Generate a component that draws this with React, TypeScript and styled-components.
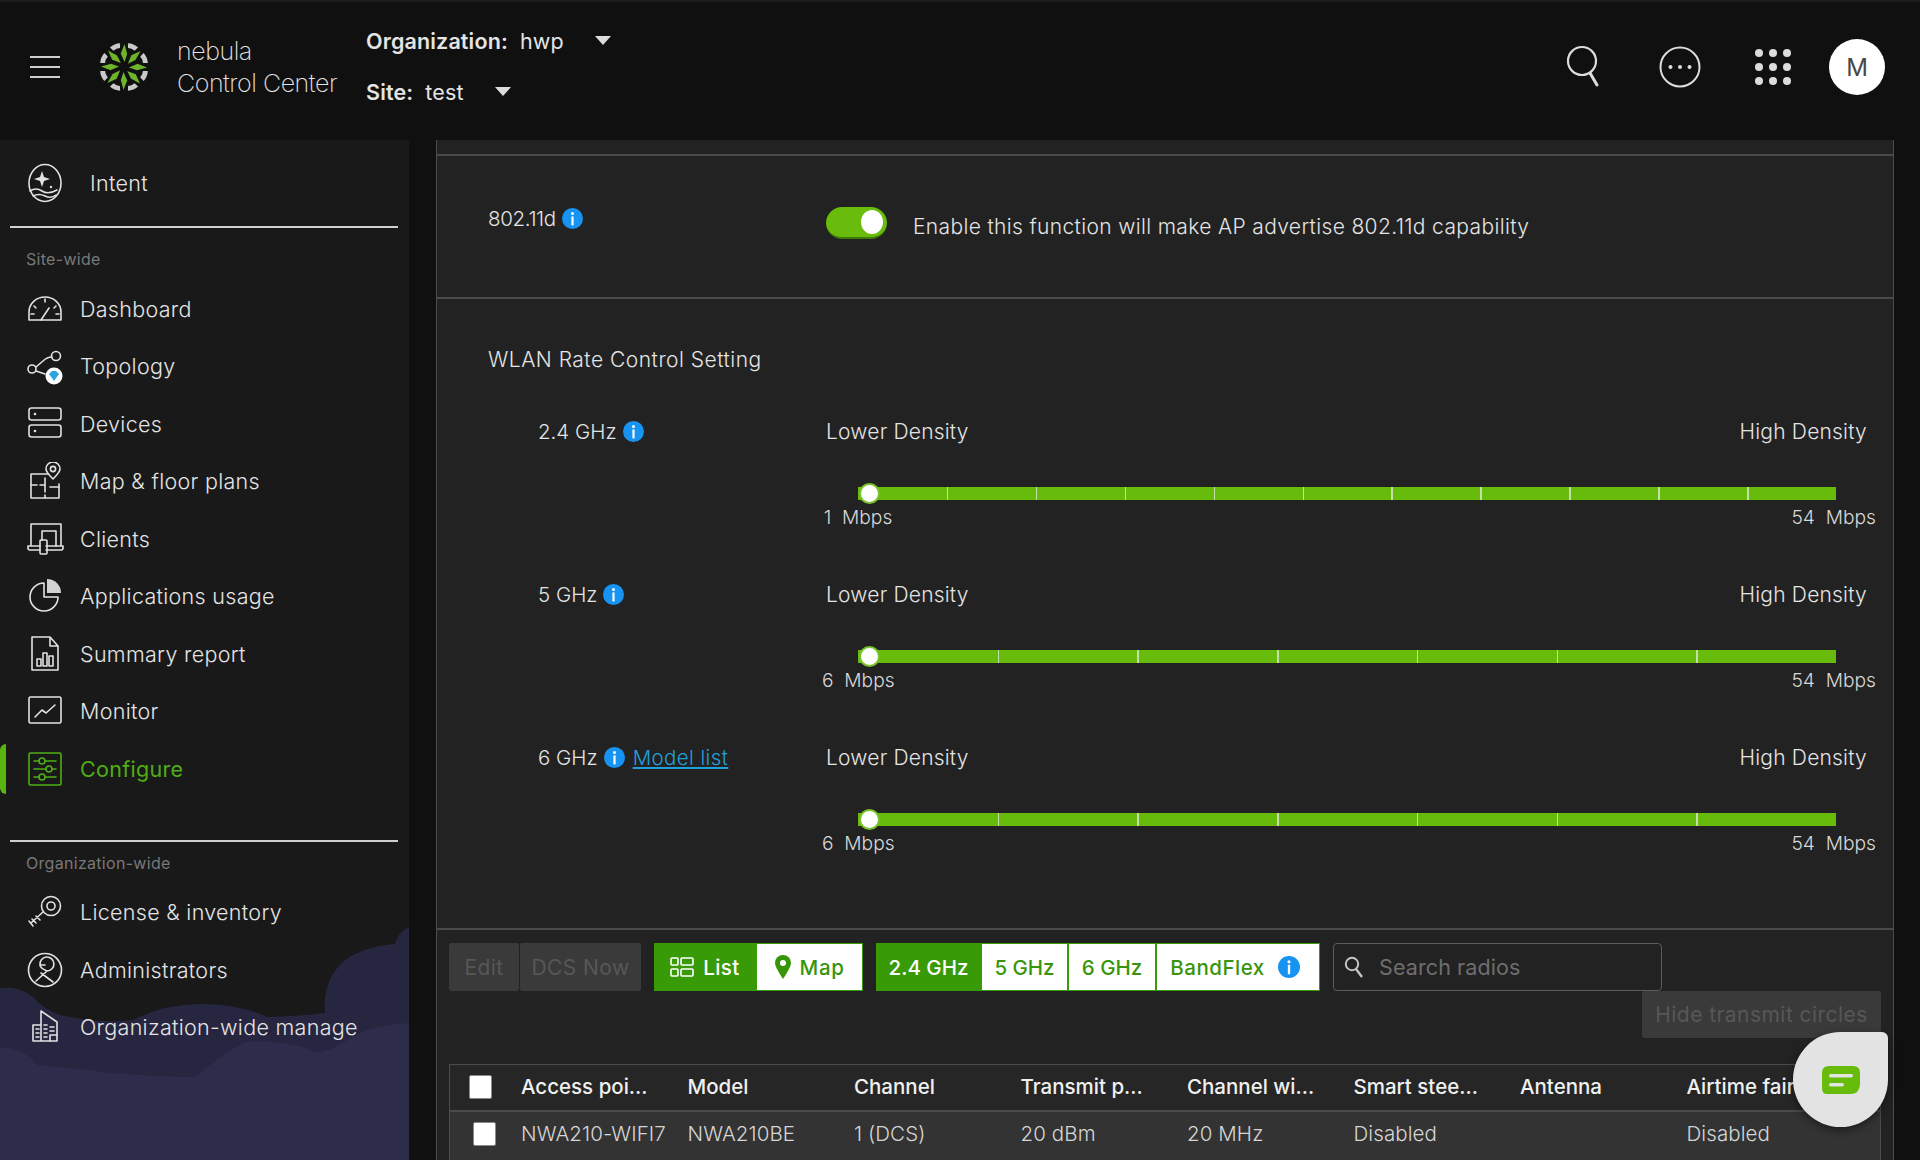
import React from "react";
import styled, { createGlobalStyle } from "styled-components";

const Global = createGlobalStyle`
  html, body { margin: 0; padding: 0; background: #101010; }
  body { font-family: Inter, "Noto Sans", "Liberation Sans", sans-serif; }
  * { box-sizing: border-box; }
`;

const Page = styled.div`
  position: relative;
  width: 1920px;
  height: 1160px;
  overflow: hidden;
  display: flex;
  flex-direction: column;
  background: #101010;
  color: #e6e6e6;
  font-weight: 300;
`;

/* ---------- header ---------- */
const Header = styled.header`
  height: 140px;
  flex: none;
  display: flex;
  align-items: center;
  padding: 0 35px 8px 30px;
  border-top: 2px solid #1c1c1c;
`;
const Burger = styled.div`
  width: 30px;
  display: flex;
  flex-direction: column;
  gap: 8px;
  margin-right: 36px;
  span { display: block; height: 2px; background: #cfcfcf; }
`;
const BrandText = styled.div`
  margin-left: 25px;
  width: 189px;
  font-size: 25px;
  line-height: 32px;
  font-weight: 200;
  color: #e4e4e4;
  white-space: nowrap;
  letter-spacing: -0.45px;
`;
const Pickers = styled.div`
  display: flex;
  flex-direction: column;
  gap: 25px;
  margin-top: -2px;
`;
const Picker = styled.div`
  display: flex;
  align-items: center;
  height: 26px;
  font-size: 21.5px;
  white-space: nowrap;
  color: #e4e4e4;
  font-weight: 400;
  letter-spacing: 0.15px;
  b { font-weight: 600; margin-right: 12px; }
`;
const Caret = styled.i<{ $gap: number }>`
  margin-left: ${(p) => p.$gap}px;
  width: 0;
  height: 0;
  border-left: 8.5px solid transparent;
  border-right: 8.5px solid transparent;
  border-top: 9px solid #dcdcdc;
`;
const Spacer = styled.div`
  flex: 1;
`;
const HeadIcons = styled.div`
  display: flex;
  align-items: center;
`;
const SearchGlyph = styled.svg`
  margin: 4px 54px 0 0;
`;
const MoreGlyph = styled.svg`
  margin-right: 54px;
`;
const Avatar = styled.div`
  width: 56px;
  height: 56px;
  border-radius: 50%;
  background: #fff;
  color: #484848;
  font-size: 24px;
  font-weight: 400;
  display: flex;
  align-items: center;
  justify-content: center;
  margin-left: 38px;
`;

/* ---------- layout ---------- */
const Body = styled.div`
  flex: 1;
  display: flex;
  min-height: 0;
`;
const Sidebar = styled.aside`
  position: relative;
  width: 409px;
  flex: none;
  background: #191919;
  overflow: hidden;
  display: flex;
  flex-direction: column;
`;
const Clouds = styled.svg`
  position: absolute;
  left: 0;
  bottom: 0;
  width: 409px;
  height: 240px;
`;
const SideInner = styled.div`
  position: relative;
  display: flex;
  flex-direction: column;
`;
const IntentRow = styled.div`
  display: flex;
  align-items: center;
  height: 86px;
  padding-left: 27px;
  font-size: 21.5px;
  letter-spacing: 0.3px;
  span { margin-left: 27px; }
`;
const Rule = styled.div<{ $mt?: number }>`
  height: 2px;
  margin: ${(p) => p.$mt ?? 0}px 11px 0 10px;
  background: #cfcfcf;
`;
const SectionLabel = styled.div<{ $h: number; $pt: number }>`
  height: ${(p) => p.$h}px;
  padding: ${(p) => p.$pt}px 0 0 26px;
  font-size: 16px;
  line-height: 18px;
  letter-spacing: 0.3px;
  color: #787878;
  font-weight: 400;
`;
const NavItem = styled.div<{ $active?: boolean }>`
  position: relative;
  height: 57.5px;
  display: flex;
  align-items: center;
  padding-left: 26px;
  font-size: 21.5px;
  letter-spacing: 0.3px;
  color: ${(p) => (p.$active ? "#4fae14" : "#e4e4e4")};
  font-weight: ${(p) => (p.$active ? 400 : 300)};
  svg { flex: none; margin-right: 16px; }
  ${(p) =>
    p.$active
      ? `&::before { content: ""; position: absolute; left: 0; top: 4px; width: 6px; height: 50px; background: #58b40e; border-radius: 6px 0 0 6px; }`
      : ""}
`;
const Main = styled.main`
  margin-left: 27px;
  width: 1458px;
  background: #222222;
  border-left: 1px solid #4c4c4c;
  border-right: 1px solid #4c4c4c;
  display: flex;
  flex-direction: column;
  overflow: hidden;
`;
const TopStrip = styled.div`
  height: 16px;
  flex: none;
  border-bottom: 2px solid #4a4a4a;
`;
const D11Section = styled.section`
  height: 143px;
  flex: none;
  display: grid;
  grid-template-columns: 338px 1fr;
  padding-left: 51px;
  border-bottom: 2px solid #4a4a4a;
`;
const LabelLine = styled.div<{ $mt?: number }>`
  display: flex;
  align-items: center;
  height: 26px;
  margin-top: ${(p) => p.$mt ?? 0}px;
  font-size: 20.5px;
  color: #e4e4e4;
  white-space: nowrap;
  svg { margin-left: 6px; flex: none; }
`;
const TightLabel = styled(LabelLine)`
  letter-spacing: -0.35px;
`;
const SectionTitle = styled(LabelLine)`
  font-size: 21px;
  letter-spacing: 0.5px;
`;
const SwitchRow = styled.div`
  display: flex;
  align-items: center;
  height: 32px;
  margin-top: 51px;
  font-size: 21px;
  letter-spacing: 0.35px;
  color: #e4e4e4;
  white-space: nowrap;
  span { margin-top: 7px; }
`;
const Switch = styled.div`
  width: 61px;
  height: 32px;
  border-radius: 16px;
  background: #69bb0c;
  border-bottom: 2px solid #3f7a05;
  display: flex;
  align-items: center;
  justify-content: flex-end;
  padding-right: 4px;
  margin-right: 26px;
  i { width: 22px; height: 24px; border-radius: 50%; background: #fff; }
`;
const RateSection = styled.section`
  height: 631px;
  flex: none;
  padding: 47px 0 0 51px;
  border-bottom: 2px solid #4a4a4a;
`;
const RateRow = styled.div<{ $first?: boolean }>`
  height: 163px;
  display: grid;
  grid-template-columns: 288px 1041px;
  padding-left: 50px;
  margin-top: ${(p) => (p.$first ? 46 : 0)}px;
`;
const ModelLink = styled.a`
  color: #22a0dc;
  text-decoration: underline;
  margin-left: 8px;
  letter-spacing: 0.4px;
`;
const DensityHead = styled.div`
  display: flex;
  justify-content: space-between;
  height: 26px;
  align-items: center;
  font-size: 21px;
  letter-spacing: 0.2px;
  color: #e4e4e4;
`;
const Track = styled.div`
  position: relative;
  margin: 38.5px 0 0 32px;
  width: 978px;
  height: 13px;
  top: 4px;
  background: #67bb0a;
`;
const Tick = styled.span`
  position: absolute;
  top: 0;
  bottom: 0;
  width: 1.5px;
  background: #c5dfa8;
`;
const Thumb = styled.span`
  position: absolute;
  left: 1px;
  top: -4px;
  width: 21px;
  height: 21px;
  border-radius: 50%;
  background: #fff;
  border: 2px solid #79c12a;
`;
const RangeLabels = styled.div`
  display: flex;
  justify-content: space-between;
  margin: 9.5px 0 0 -4px;
  width: 1054px;
  font-size: 19.2px;
  line-height: 24px;
  color: #d8d8d8;
  span { width: 72px; text-align: center; white-space: pre; }
  span:last-child { width: 110px; text-align: right; }
`;
const TableSection = styled.section`
  flex: 1;
  padding: 13px 12px 0 12px;
  display: flex;
  flex-direction: column;
`;
const Toolbar = styled.div`
  display: flex;
  height: 48px;
  flex: none;
`;
const Disabled = styled.div<{ $w: number; $ml?: number; $h?: number }>`
  width: ${(p) => p.$w}px;
  height: ${(p) => p.$h ?? 48}px;
  margin-left: ${(p) => p.$ml ?? 0}px;
  background: #3a3a3a;
  color: #575757;
  font-size: 21px;
  letter-spacing: 0.45px;
  font-weight: 400;
  border-radius: 2px;
  display: flex;
  align-items: center;
  justify-content: center;
  white-space: nowrap;
  flex: none;
`;
const Seg = styled.div<{ $w: number; $on?: boolean; $ml?: number; $ls?: number }>`
  width: ${(p) => p.$w}px;
  height: 48px;
  margin-left: ${(p) => p.$ml ?? 0}px;
  flex: none;
  background: ${(p) => (p.$on ? "#399a07" : "#fff")};
  color: ${(p) => (p.$on ? "#fff" : "#37950a")};
  border: 1px solid #399a07;
  font-size: 20.5px;
  font-weight: 500;
  letter-spacing: ${(p) => p.$ls ?? 0}px;
  display: flex;
  align-items: center;
  justify-content: center;
  gap: 9px;
  white-space: nowrap;
`;
const FlexInfo = styled.span`
  display: flex;
  margin: 0 6px 0 4px;
`;
const SearchBox = styled.div`
  width: 329px;
  height: 48px;
  margin-left: 13px;
  flex: none;
  border: 1px solid #5c5c5c;
  border-radius: 4px;
  display: flex;
  align-items: center;
  padding-left: 10px;
  gap: 15px;
  color: #6e6e6e;
  font-size: 21.5px;
  letter-spacing: 0.1px;
  font-weight: 400;
`;
const HideRow = styled.div`
  display: flex;
  justify-content: flex-end;
  height: 73px;
  flex: none;
`;
const Table = styled.div`
  border: 1px solid #4c4c4c;
  border-bottom: none;
  flex: 1;
  overflow: hidden;
`;
const THead = styled.div`
  display: grid;
  grid-template-columns: 71px repeat(8, 166.5px);
  height: 47px;
  align-items: center;
  background: #262626;
  border-bottom: 2px solid #4a4a4a;
  padding-bottom: 2px;
  font-size: 20.5px;
  font-weight: 500;
  color: #f0f0f0;
  white-space: nowrap;
`;
const TRow = styled(THead)`
  height: 49px;
  background: #333333;
  border-bottom: none;
  padding-bottom: 6px;
  font-weight: 300;
  letter-spacing: 0.1px;
  color: #d6d6d6;
`;
const Check = styled.div<{ $ml: number }>`
  width: 23px;
  height: 24px;
  margin-left: ${(p) => p.$ml}px;
  background: #fff;
  border: 1px solid #8a8a8a;
  border-radius: 2px;
`;
const Chat = styled.div`
  position: absolute;
  left: 1793px;
  top: 1032px;
  width: 95px;
  height: 95px;
  border-radius: 50% 6px 50% 50%;
  background: #e3e3e3;
  box-shadow: 0 3px 8px rgba(0, 0, 0, 0.45);
  display: flex;
  align-items: center;
  justify-content: center;
`;

/* ---------- drawings ---------- */
const s = { fill: "none", stroke: "#e2e2e2", strokeWidth: 1.6, strokeLinecap: "round", strokeLinejoin: "round" } as const;

const Info = ({ size = 21 }: { size?: number }) => (
  <svg width={size} height={size} viewBox="0 0 21 21">
    <circle cx="10.5" cy="10.5" r="10.5" fill="#1793f2" />
    <circle cx="10.5" cy="5.6" r="1.5" fill="#fff" />
    <rect x="9.4" y="8.4" width="2.2" height="9" fill="#fff" />
  </svg>
);

const Logo = () => (
  <svg width="56" height="56" viewBox="0 0 56 56">
    {[0, 45, 90, 135, 180, 225, 270, 315].map((a) => (
      <g key={a} transform={`rotate(${a} 28 28)`}>
        <path d="M22.5 4.5 Q28 2.5 33.5 4.5 L31.5 9 Q28 7.8 24.5 9Z" fill="#c9c9c9" transform="rotate(22.5 28 28)" />
        <path d="M28.5 23 L24.8 14.5 L28.5 5 L31.2 15Z" fill="#6db32c" />
      </g>
    ))}
  </svg>
);

const Nav = ({ name, color = "#e2e2e2" }: { name: string; color?: string }) => {
  const st = { ...s, stroke: color };
  const common = { width: 38, height: 38, viewBox: "0 0 38 38" };
  switch (name) {
    case "intent":
      return (
        <svg width="36" height="40" viewBox="0 0 36 40">
          <ellipse cx="18" cy="20" rx="16" ry="18.5" {...st} />
          <path d="M15 8 L17 14 L23 16 L17 18 L15 24 L13 18 L7 16 L13 14Z" fill={color} />
          <circle cx="24" cy="24" r="1.2" fill={color} />
          <path d="M3 28 Q9 24 15 28 T30 27" {...st} />
          <path d="M6 33 Q12 30 18 33 T29 32" {...st} />
        </svg>
      );
    case "dashboard":
      return (
        <svg {...common}>
          <path d="M3 30 V22 A16 15 0 0 1 35 22 V30Z" {...st} />
          <path d="M15 30 L23 18 M19 9 V12 M8 16 L10 18 M30 16 L28 18 M5 24 H8 M33 24 H30" {...st} />
        </svg>
      );
    case "topology":
      return (
        <svg {...common}>
          <circle cx="6" cy="22" r="4" {...st} />
          <circle cx="30" cy="9" r="4.5" {...st} />
          <path d="M10 20 L17 14 Q21 10 26 10 M10 24 L19 27" {...st} />
          <circle cx="28" cy="29" r="8.5" fill="#fff" />
          <path d="M23 27 L28 34 L33 27 L30 24 H26Z" fill="#2aa5e0" />
        </svg>
      );
    case "devices":
      return (
        <svg {...common}>
          <rect x="3" y="3" width="32" height="12" rx="2.5" {...st} />
          <rect x="3" y="20" width="32" height="12" rx="2.5" {...st} />
          <circle cx="9" cy="9" r="1.3" fill={color} />
          <circle cx="9" cy="26" r="1.3" fill={color} />
        </svg>
      );
    case "map":
      return (
        <svg {...common}>
          <path d="M24 12 H5 V36 H33 V22" {...st} />
          <path d="M5 23 H11 M14 23 H19 M19 16 V30 M19 33 V36 M24 25 H33" {...st} />
          <path d="M27 17 Q20 10 20 7 A7 7 0 0 1 34 7 Q34 10 27 17Z" {...st} fill="#191919" />
          <circle cx="27" cy="7" r="2.6" {...st} />
        </svg>
      );
    case "clients":
      return (
        <svg {...common}>
          <path d="M5 26 V4 H35 V26 M2 26 H14 M20 26 H37 V28 Q37 30 35 30 H20 M14 30 H4 Q2 30 2 28 V26" {...st} />
          <rect x="14" y="20" width="7" height="14" rx="1" {...st} />
          <path d="M16 20 V11 H30 V26" {...st} />
        </svg>
      );
    case "apps":
      return (
        <svg {...common}>
          <path d="M18 6 A14 14 0 1 0 32 20 H18Z" {...st} />
          <path d="M21 2 A14 14 0 0 1 35 16 H21Z" fill="#d2d2d2" />
        </svg>
      );
    case "report":
      return (
        <svg {...common}>
          <path d="M6 2 H24 L32 11 V35 H6Z M24 2 V11 H32" {...st} />
          <rect x="11" y="24" width="4" height="7" {...st} />
          <rect x="17" y="18" width="4" height="13" {...st} />
          <rect x="23" y="21" width="4" height="10" {...st} />
        </svg>
      );
    case "monitor":
      return (
        <svg {...common}>
          <rect x="3" y="5" width="32" height="26" rx="1.5" {...st} />
          <path d="M9 25 L16 18 L20 21 L29 13" {...st} />
        </svg>
      );
    case "configure":
      return (
        <svg {...common}>
          <rect x="3" y="3" width="32" height="32" rx="1.5" {...st} />
          <path d="M8 11 H13 M19 11 H30 M8 19 H20 M26 19 H30 M8 27 H13 M19 27 H30" {...st} />
          <circle cx="16" cy="11" r="3" {...st} />
          <circle cx="23" cy="19" r="3" {...st} />
          <circle cx="16" cy="27" r="3" {...st} />
        </svg>
      );
    case "license":
      return (
        <svg {...common}>
          <circle cx="25" cy="13" r="9.5" {...st} />
          <circle cx="25" cy="13" r="4" {...st} />
          <path d="M17 19 L5 30 M6 26 L10 30 M10 23 L14 27 M3 28 L7 33" {...st} />
        </svg>
      );
    case "admin":
      return (
        <svg {...common}>
          <circle cx="19" cy="19" r="16.5" {...st} />
          <path d="M14 14 A7 7 0 1 1 21 20 Q14 17 14 14Z M14 14 H19 M21 20 L10 30 M15 22 L27 31" {...st} />
        </svg>
      );
    default:
      return (
        <svg {...common}>
          <path d="M15 33 V3 L31 14 V33 H7 V17 H15" {...st} />
          <path d="M24 33 V27 H31" {...st} />
          <path d="M10 21 H13 M10 25 H13 M10 29 H13 M18 17 H21 M18 21 H21 M18 25 H21 M18 29 H21 M24 19 H28 M24 23 H28" {...st} />
        </svg>
      );
  }
};

const navTop: [string, string][] = [
  ["dashboard", "Dashboard"],
  ["topology", "Topology"],
  ["devices", "Devices"],
  ["map", "Map & floor plans"],
  ["clients", "Clients"],
  ["apps", "Applications usage"],
  ["report", "Summary report"],
  ["monitor", "Monitor"],
];
const navOrg: [string, string][] = [
  ["license", "License & inventory"],
  ["admin", "Administrators"],
  ["org", "Organization-wide manage"],
];

const rates = [
  { band: "2.4 GHz", min: "1  Mbps", n: 11 },
  { band: "5 GHz", min: "6  Mbps", n: 7 },
  { band: "6 GHz", min: "6  Mbps", n: 7, link: true },
];

const heads = ["Access poi...", "Model", "Channel", "Transmit p...", "Channel wi...", "Smart stee...", "Antenna", "Airtime fairness"];
const cells = ["NWA210-WIFI7", "NWA210BE", "1 (DCS)", "20 dBm", "20 MHz", "Disabled", "", "Disabled"];

export default function App() {
  return (
    <Page>
      <Global />
      <Header>
        <Burger>
          <span />
          <span />
          <span />
        </Burger>
        <Logo />
        <BrandText>
          nebula
          <br />
          Control Center
        </BrandText>
        <Pickers>
          <Picker>
            <b>Organization:</b>hwp
            <Caret $gap={31} />
          </Picker>
          <Picker>
            <b>Site:</b>test
            <Caret $gap={31} />
          </Picker>
        </Pickers>
        <Spacer />
        <HeadIcons>
          <SearchGlyph width="40" height="48" viewBox="0 0 40 48">
            <circle cx="17" cy="16" r="14" fill="none" stroke="#dcdcdc" strokeWidth="2.2" />
            <path d="M25 28 L32 40" stroke="#dcdcdc" strokeWidth="3" strokeLinecap="round" />
          </SearchGlyph>
          <MoreGlyph width="42" height="42" viewBox="0 0 42 42">
            <circle cx="21" cy="21" r="19.5" fill="none" stroke="#dcdcdc" strokeWidth="2" />
            <circle cx="11.5" cy="21" r="2" fill="#dcdcdc" />
            <circle cx="21" cy="21" r="2" fill="#dcdcdc" />
            <circle cx="30.5" cy="21" r="2" fill="#dcdcdc" />
          </MoreGlyph>
          <svg width="36" height="36" viewBox="0 0 36 36">
            {[4, 18, 32].flatMap((y) =>
              [4, 18, 32].map((x) => <circle key={`${x}-${y}`} cx={x} cy={y} r="4" fill="#dcdcdc" />)
            )}
          </svg>
          <Avatar>M</Avatar>
        </HeadIcons>
      </Header>
      <Body>
        <Sidebar>
          <Clouds viewBox="0 0 409 240" preserveAspectRatio="none">
            <path
              d="M0 68 Q20 66 33 77 Q45 90 60 95 Q100 104 133 100 Q165 84 200 84 Q240 84 267 97 Q300 96 325 93 Q322 60 345 40 Q365 26 395 24 Q398 12 409 7 V240 H0Z"
              fill="#272640"
            />
            <path
              d="M0 128 Q22 126 37 145 Q65 148 90 150 Q125 156 197 157 Q213 140 243 123 Q260 120 273 122 Q300 124 317 133 L333 128 Q350 118 367 110 Q390 104 409 103 V240 H0Z"
              fill="#2d2c4a"
            />
          </Clouds>
          <SideInner>
            <IntentRow>
              <Nav name="intent" />
              <span>Intent</span>
            </IntentRow>
            <Rule />
            <SectionLabel $h={52} $pt={22}>Site-wide</SectionLabel>
            {navTop.map(([k, t]) => (
              <NavItem key={k}>
                <Nav name={k} />
                {t}
              </NavItem>
            ))}
            <NavItem $active>
              <Nav name="configure" color="#4fae14" />
              Configure
            </NavItem>
            <Rule $mt={42} />
            <SectionLabel $h={42} $pt={12}>Organization-wide</SectionLabel>
            {navOrg.map(([k, t]) => (
              <NavItem key={k}>
                <Nav name={k} />
                {t}
              </NavItem>
            ))}
          </SideInner>
        </Sidebar>
        <Main>
          <TopStrip />
          <D11Section>
            <TightLabel $mt={49}>
              802.11d
              <Info />
            </TightLabel>
            <SwitchRow>
              <Switch>
                <i />
              </Switch>
              <span>Enable this function will make AP advertise 802.11d capability</span>
            </SwitchRow>
          </D11Section>
          <RateSection>
            <SectionTitle>WLAN Rate Control Setting</SectionTitle>
            {rates.map((r, i) => (
              <RateRow key={r.band} $first={i === 0}>
                <LabelLine>
                  {r.band}
                  <Info />
                  {r.link && <ModelLink>Model list</ModelLink>}
                </LabelLine>
                <div>
                  <DensityHead>
                    <span>Lower Density</span>
                    <span>High Density</span>
                  </DensityHead>
                  <Track>
                    {Array.from({ length: r.n - 1 }, (_, k) => (
                      <Tick key={k} style={{ left: `${((k + 1) / r.n) * 100}%` }} />
                    ))}
                    <Thumb />
                  </Track>
                  <RangeLabels>
                    <span>{r.min}</span>
                    <span>54  Mbps</span>
                  </RangeLabels>
                </div>
              </RateRow>
            ))}
          </RateSection>
          <TableSection>
            <Toolbar>
              <Disabled $w={70}>Edit</Disabled>
              <Disabled $w={121} $ml={1}>DCS Now</Disabled>
              <Seg $w={102} $ml={13} $on $ls={0.4}>
                <svg width="24" height="20" viewBox="0 0 24 20">
                  <g fill="none" stroke="#fff" strokeWidth="1.6">
                    <rect x="1" y="1" width="7" height="7" rx="1" />
                    <rect x="1" y="12" width="7" height="7" rx="1" />
                    <rect x="11" y="1" width="12" height="7" rx="1" />
                    <rect x="11" y="12" width="12" height="7" rx="1" />
                  </g>
                </svg>
                List
              </Seg>
              <Seg $w={107} $ls={0.6}>
                <svg width="16" height="24" viewBox="0 0 16 24">
                  <path d="M8 24 Q0 12 0 8 A8 8 0 0 1 16 8 Q16 12 8 24Z" fill="#37950a" />
                  <circle cx="8" cy="8" r="3" fill="#fff" />
                </svg>
                Map
              </Seg>
              <Seg $w={105} $ml={13} $on>2.4 GHz</Seg>
              <Seg $w={87}>5 GHz</Seg>
              <Seg $w={88}>6 GHz</Seg>
              <Seg $w={164} $ls={0.5}>
                BandFlex
                <FlexInfo>
                  <Info size={22} />
                </FlexInfo>
              </Seg>
              <SearchBox>
                <svg width="20" height="22" viewBox="0 0 20 22">
                  <circle cx="8" cy="8" r="6.2" fill="none" stroke="#c4c4c4" strokeWidth="2" />
                  <path d="M12 13 L18 21" stroke="#c4c4c4" strokeWidth="2.4" />
                </svg>
                Search radios
              </SearchBox>
            </Toolbar>
            <HideRow>
              <Disabled $w={239} $h={47}>Hide transmit circles</Disabled>
            </HideRow>
            <Table>
              <THead>
                <Check $ml={19} />
                {heads.map((h) => (
                  <span key={h}>{h}</span>
                ))}
              </THead>
              <TRow>
                <Check $ml={23} />
                {cells.map((c, i) => (
                  <span key={i}>{c}</span>
                ))}
              </TRow>
            </Table>
          </TableSection>
        </Main>
      </Body>
      <Chat>
        <svg width="38" height="28" viewBox="0 0 38 28">
          <path d="M7 0 H31 Q38 0 38 7 V18 Q38 28 28 28 H5 Q0 28 0 22 V7 Q0 0 7 0Z" fill="#67bb0a" />
          <rect x="7" y="8" width="24" height="3.5" rx="1.7" fill="#e3e3e3" />
          <rect x="7" y="17" width="15" height="3.5" rx="1.7" fill="#e3e3e3" />
        </svg>
      </Chat>
    </Page>
  );
}
